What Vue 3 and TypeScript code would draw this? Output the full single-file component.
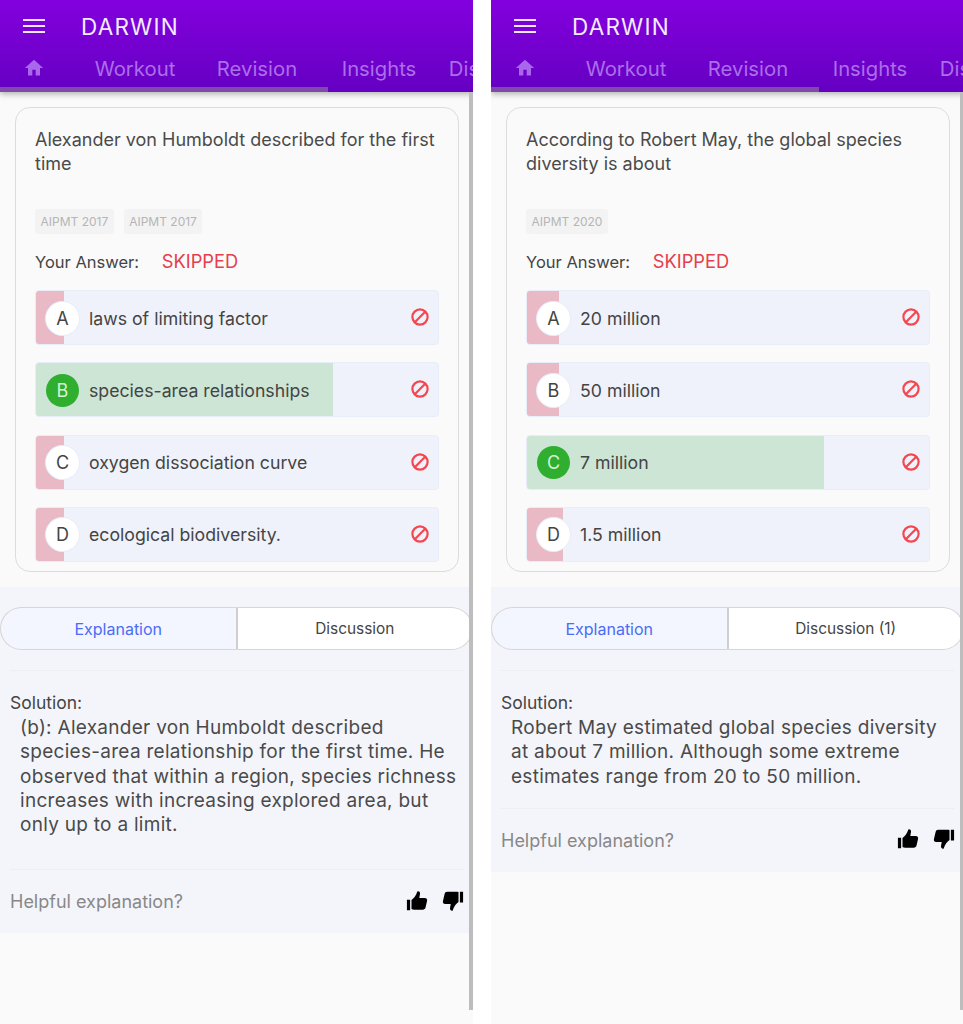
<script setup lang="ts">
interface Option {
  letter: string
  text: string
  fill: number
  correct?: boolean
}

interface Question {
  title: string
  tags: string[]
  options: Option[]
  solution: string[]
  discussion: string
  long: boolean
}

const tabs = ['Workout', 'Revision', 'Insights', 'Discussion']

const questions: Question[] = [
  {
    title: 'Alexander von Humboldt described for the first time',
    tags: ['AIPMT 2017', 'AIPMT 2017'],
    options: [
      { letter: 'A', text: 'laws of limiting factor', fill: 28 },
      { letter: 'B', text: 'species-area relationships', fill: 297, correct: true },
      { letter: 'C', text: 'oxygen dissociation curve', fill: 28 },
      { letter: 'D', text: 'ecological biodiversity.', fill: 28 }
    ],
    solution: [
      '(b): Alexander von Humboldt described',
      'species-area relationship for the first time. He',
      'observed that within a region, species richness',
      'increases with increasing explored area, but',
      'only up to a limit.'
    ],
    discussion: 'Discussion',
    long: true
  },
  {
    title: 'According to Robert May, the global species diversity is about',
    tags: ['AIPMT 2020'],
    options: [
      { letter: 'A', text: '20 million', fill: 32 },
      { letter: 'B', text: '50 million', fill: 32 },
      { letter: 'C', text: '7 million', fill: 297, correct: true },
      { letter: 'D', text: '1.5 million', fill: 36 }
    ],
    solution: [
      'Robert May estimated global species diversity',
      'at about 7 million. Although some extreme',
      'estimates range from 20 to 50 million.'
    ],
    discussion: 'Discussion (1)',
    long: false
  }
]
</script>

<template>
  <div class="page">
    <section v-for="q in questions" :key="q.title" class="phone">
      <header class="appbar">
        <div class="toolbar">
          <svg class="menu" width="24" height="16" viewBox="0 0 24 16">
            <path d="M1 2h22M1 8h22M1 14h22" stroke="#f2e6ff" stroke-width="2.2" fill="none" />
          </svg>
          <span class="brand">DARWIN</span>
        </div>
        <nav class="tabs">
          <span class="home">
            <svg width="20" height="20" viewBox="0 0 24 24">
              <path d="M10 21v-7h4v7h5.200v-9H23L12 2 1 12h3.800v9z" fill="#a868ec" />
            </svg>
          </span>
          <span v-for="t in tabs" :key="t" class="tab">{{ t }}</span>
        </nav>
        <div class="indicator"></div>
      </header>

      <div class="upper">
        <article class="card">
          <p class="title">{{ q.title }}</p>
          <div class="tags">
            <span v-for="(tag, i) in q.tags" :key="i" class="tag">{{ tag }}</span>
          </div>
          <p class="answer">Your Answer: <span class="skipped">SKIPPED</span></p>
          <div class="options">
            <div v-for="o in q.options" :key="o.letter" class="option">
              <div
                class="fill"
                :class="{ good: o.correct }"
                :style="{ width: o.fill + 'px' }"
              ></div>
              <span class="letter" :class="{ good: o.correct }">{{ o.letter }}</span>
              <span class="text">{{ o.text }}</span>
              <svg class="ban" width="18" height="18" viewBox="0 0 18 18">
                <circle cx="9" cy="9" r="7.600" fill="none" stroke="#f4474f" stroke-width="2.200" />
                <path d="M14.200 3.800 3.800 14.200" stroke="#f4474f" stroke-width="2.200" />
              </svg>
            </div>
          </div>
        </article>
      </div>

      <div class="lower">
        <div class="switch">
          <button class="active">Explanation</button>
          <button>{{ q.discussion }}</button>
        </div>
        <div class="solution" :class="{ long: q.long }">
          <div class="sol-label">Solution:</div>
          <p class="sol-text">
            <span v-for="line in q.solution" :key="line" class="sol-line">{{ line }}</span>
          </p>
        </div>
        <div class="helpful">
          <span>Helpful explanation?</span>
          <div class="thumbs">
            <svg width="22" height="22" viewBox="0 0 24 24">
              <path d="M1 10.500h3.500v11.500H1zM6 21.800V10.800c2.500-1.800 5-4.800 6.400-9.300 1.400-.5 3 .4 2.900 2.500l-.8 4.600h6c1.800 0 2.900 1.400 2.500 3l-1.700 7.600c-.4 1.500-1.500 2.300-2.900 2.300H9c-1.200 0-2.100-.2-3-.7z" fill="#000" />
            </svg>
            <svg width="22" height="22" viewBox="0 0 24 24">
              <path d="M23 13.500h-3.500V2H23zM18 2.200v11c-2.500 1.800-5 4.800-6.400 9.300-1.400.5-3-.4-2.900-2.500l.8-4.600h-6c-1.800 0-2.900-1.400-2.500-3l1.700-7.600C3.100 2.800 4.200 2 5.600 2H15c1.200 0 2.100.2 3 .2z" fill="#000" />
            </svg>
          </div>
        </div>
      </div>
      <div class="scrollbar"></div>
    </section>
  </div>
</template>

<style scoped>
.page {
  display: grid;
  grid-template-columns: 473px 473px;
  column-gap: 18px;
  width: 963px;
  height: 1024px;
  overflow: hidden;
  background: #fff;
  font-family: Inter, 'Open Sans', sans-serif;
  color: #444;
}

.phone {
  position: relative;
  height: 1024px;
  overflow: hidden;
  background: #fafafa;
}

.appbar {
  position: relative;
  height: 92px;
  background: linear-gradient(180deg, #8300de 0%, #6500c2 100%);
  box-shadow: 0 2px 6px rgba(0, 0, 0, 0.3);
}

.toolbar {
  display: flex;
  align-items: center;
  height: 52px;
  padding-left: 22px;
}

.brand {
  margin-left: 35px;
  font-size: 22.5px;
  letter-spacing: 1.2px;
  color: #f4eaff;
}

.tabs {
  display: flex;
  align-items: center;
  height: 32px;
  white-space: nowrap;
  overflow: hidden;
  color: #ab6fea;
  font-size: 20.3px;
}

.home {
  display: flex;
  justify-content: center;
  flex: none;
  width: 68px;
  margin-right: 6px;
}

.tab {
  flex: none;
  width: 122px;
  text-align: center;
}

.indicator {
  position: absolute;
  left: 0;
  bottom: 0;
  width: 328px;
  height: 5px;
  background: #7f4aa8;
}

.upper {
  padding: 15px 14px 15px 15px;
}

.card {
  height: 465px;
  box-sizing: border-box;
  padding: 20px 19px 10px;
  border: 1px solid #dcdcdc;
  border-radius: 15px;
}

.title {
  height: 75px;
  margin: 0;
  font-size: 18px;
  line-height: 24px;
  color: #4a4a4a;
}

.tags {
  display: flex;
  gap: 10px;
  margin-top: 6px;
}

.tag {
  height: 25px;
  padding: 0 5.500px;
  line-height: 25px;
  font-size: 12px;
  color: #b5b5b5;
  background: #f3f3f3;
  border-radius: 3px;
}

.answer {
  margin: 15px 0 0;
  font-size: 16.5px;
  line-height: 24px;
  color: #444;
}

.skipped {
  margin-left: 18px;
  font-size: 18.3px;
  color: #e5404c;
}

.options {
  display: flex;
  flex-direction: column;
  gap: 17.3px;
  margin-top: 16px;
}

.option {
  position: relative;
  display: flex;
  align-items: center;
  height: 55px;
  box-sizing: border-box;
  padding: 1px 0 0 10px;
  background: #eff2fb;
  border: 1px solid #e9edf9;
  border-radius: 4px;
  overflow: hidden;
}

.fill {
  position: absolute;
  left: 0;
  top: 0;
  bottom: 0;
  background: #e9b9c5;
}

.fill.good {
  background: #cde5d5;
}

.letter {
  position: relative;
  flex: none;
  width: 33px;
  height: 33px;
  border-radius: 50%;
  background: #fff;
  box-shadow: 0 0 0 1px #e9edf9;
  text-align: center;
  line-height: 34px;
  font-size: 18px;
  color: #444;
}

.letter.good {
  background: #2fae2f;
  color: #d6f2d6;
  box-shadow: none;
}

.text {
  position: relative;
  margin-left: 10px;
  font-size: 17.7px;
  color: #444;
}

.ban {
  position: absolute;
  right: 9px;
  top: 17px;
}

.lower {
  padding-top: 20px;
  background: #f4f5fb;
}

.switch {
  display: flex;
  height: 43px;
}

.switch button {
  flex: 1;
  padding: 0;
  font: inherit;
  font-size: 15.400px;
  color: #444;
  background: #fff;
  border: 1px solid #d6d6d6;
}

.switch button:first-child {
  border-radius: 22px 0 0 22px;
  border-right: 1px solid #cfcfcf;
}

.switch button:last-child {
  border-left: 1px solid #cfcfcf;
  border-radius: 0 22px 22px 0;
}

.switch button.active {
  font-size: 16px;
  background: #f3f6fe;
  color: #4a6cf7;
}

.solution {
  margin: 20px 10px 0;
  padding: 20px 0 19px;
  border-top: 1px solid #eceef5;
  border-bottom: 1px solid #eceef5;
}

.solution.long {
  padding-bottom: 32px;
}

.sol-label {
  font-size: 17.5px;
  line-height: 24px;
  color: #444;
}

.sol-text {
  margin: 1px 0 0;
  padding-left: 10px;
  font-size: 19px;
  letter-spacing: 0.28px;
  line-height: 24.3px;
  color: #4a4a4a;
}

.sol-line {
  display: block;
  white-space: nowrap;
}

.helpful {
  display: flex;
  justify-content: space-between;
  align-items: center;
  height: 63px;
  padding: 0 9px 0 10px;
  font-size: 18px;
  color: #888;
}

.thumbs {
  display: flex;
  gap: 14px;
  margin-top: -2px;
}

.scrollbar {
  position: absolute;
  right: 0;
  top: 92px;
  width: 4px;
  height: 918px;
  background: #bdbdbd;
}
</style>
